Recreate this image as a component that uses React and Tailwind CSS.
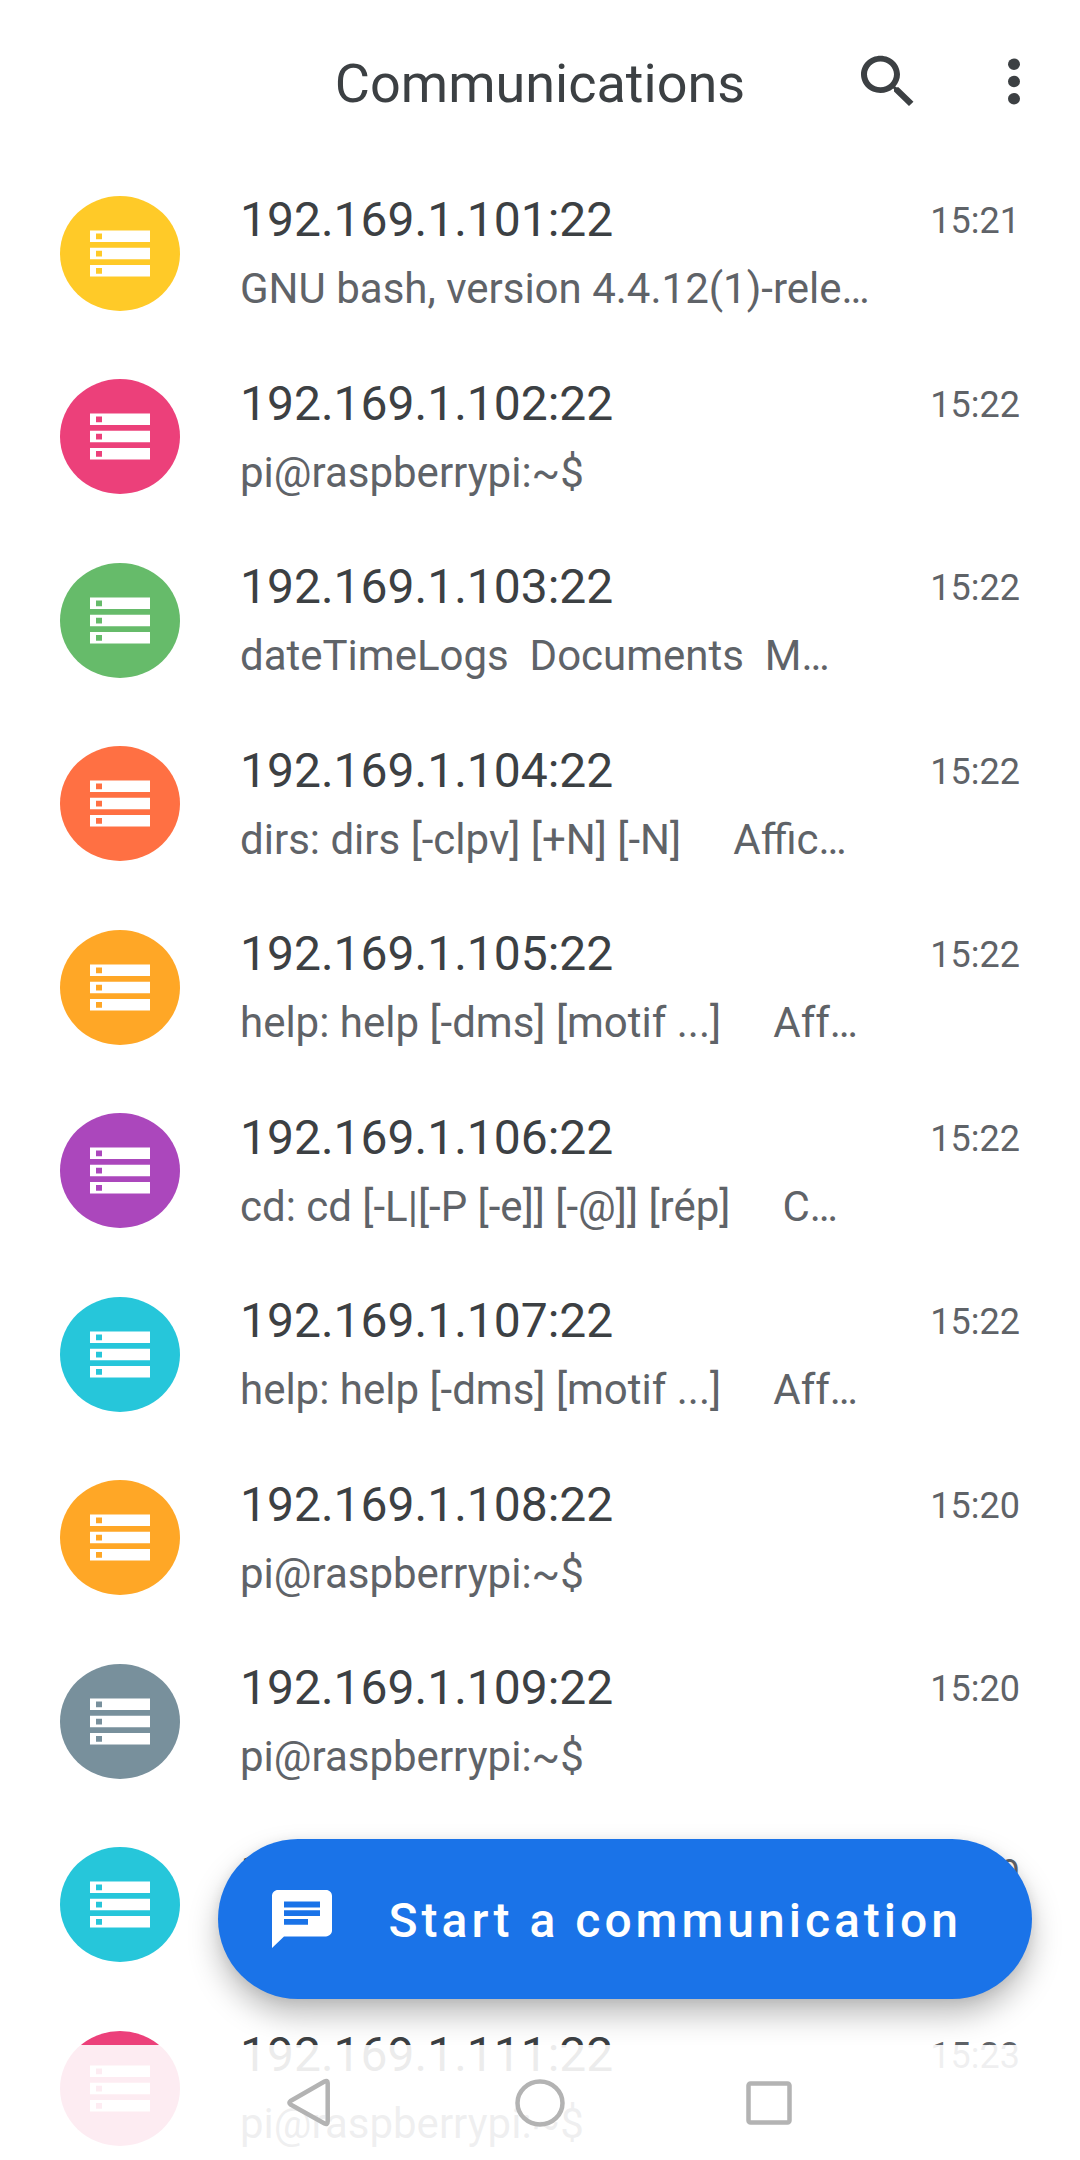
import React from "react";

const sessions = [
  { host: "192.169.1.101:22", preview: "GNU bash, version 4.4.12(1)-rele…", time: "15:21", color: "text-[#ffca28]" },
  { host: "192.169.1.102:22", preview: "pi@raspberrypi:~$", time: "15:22", color: "text-[#ec407a]" },
  { host: "192.169.1.103:22", preview: "dateTimeLogs  Documents  M…", time: "15:22", color: "text-[#66bb6a]" },
  { host: "192.169.1.104:22", preview: "dirs: dirs [-clpv] [+N] [-N]     Affic…", time: "15:22", color: "text-[#ff7043]" },
  { host: "192.169.1.105:22", preview: "help: help [-dms] [motif ...]     Aff…", time: "15:22", color: "text-[#ffa726]" },
  { host: "192.169.1.106:22", preview: "cd: cd [-L|[-P [-e]] [-@]] [rép]     C…", time: "15:22", color: "text-[#ab47bc]" },
  { host: "192.169.1.107:22", preview: "help: help [-dms] [motif ...]     Aff…", time: "15:22", color: "text-[#26c6da]" },
  { host: "192.169.1.108:22", preview: "pi@raspberrypi:~$", time: "15:20", color: "text-[#ffa726]" },
  { host: "192.169.1.109:22", preview: "pi@raspberrypi:~$", time: "15:20", color: "text-[#78909c]" },
  { host: "192.169.1.110:22", preview: "pi@raspberrypi:~$", time: "15:19", color: "text-[#26c6da]" },
  { host: "192.169.1.111:22", preview: "pi@raspberrypi:~$", time: "15:23", color: "text-[#ec407a]" },
];

function Avatar({ color }) {
  return (
    <svg className={`h-[115px] w-[120px] shrink-0 ${color}`} viewBox="0 0 40 40" preserveAspectRatio="none" aria-hidden="true">
      <circle cx="20" cy="20" r="20" fill="currentColor" />
      <path
        fill="#fff"
        d="M10 28h20v-4H10v4zm2-3h2v2h-2v-2zM10 12v4h20v-4H10zm4 3h-2v-2h2v2zm-4 7h20v-4H10v4zm2-3h2v2h-2v-2z"
      />
    </svg>
  );
}

function SessionRow({ session }) {
  return (
    <li className="flex min-h-[184px] items-center gap-[60px] px-[60px] even:min-h-[183px]">
      <Avatar color={session.color} />
      <div className="min-w-0 flex-1 pt-[2px]">
        <div className="flex items-start justify-between">
          <h2 className="text-5xl leading-[69px] text-[#3c4043]">{session.host}</h2>
          <time className="text-4xl leading-[72px] text-[#5f6368]">{session.time}</time>
        </div>
        <p className="-mt-[3px] overflow-hidden text-[42px] leading-[69px] whitespace-pre text-[#5f6368]">{session.preview}</p>
      </div>
    </li>
  );
}

function Header() {
  return (
    <header className="grid h-[161px] shrink-0 grid-cols-[1fr_auto_1fr] items-center px-[30px] text-[#3c4043]">
      <h1 className="col-start-2 pt-[6px] text-[54px] leading-[72px]">Communications</h1>
      <div className="flex justify-end gap-[54px] pt-[2px]">
        <button type="button" aria-label="Search">
          <svg className="h-[69px] w-[72px]" viewBox="0 0 24 24" preserveAspectRatio="none" fill="currentColor">
            <path d="M15.5 14h-.79l-.28-.27C15.41 12.59 16 11.11 16 9.5 16 5.91 13.09 3 9.5 3S3 5.91 3 9.5 5.91 16 9.5 16c1.61 0 3.09-.59 4.23-1.57l.27.28v.79l5 4.99L20.49 19l-4.99-5zm-6 0C7.01 14 5 11.99 5 9.5S7.01 5 9.5 5 14 7.01 14 9.5 11.99 14 9.5 14z" />
          </svg>
        </button>
        <button type="button" aria-label="More options">
          <svg className="h-[69px] w-[72px]" viewBox="0 0 24 24" preserveAspectRatio="none" fill="currentColor">
            <circle cx="12" cy="6" r="2" />
            <circle cx="12" cy="12" r="2" />
            <circle cx="12" cy="18" r="2" />
          </svg>
        </button>
      </div>
    </header>
  );
}

function NavBar() {
  return (
    <nav className="absolute inset-x-0 bottom-0 flex h-[115px] items-center justify-center bg-white/90 text-[#b3b3b3]">
      <button type="button" aria-label="Back" className="flex w-[229px] justify-center">
        <svg className="h-[52px] w-[52px]" viewBox="0 0 52 52" fill="none" stroke="currentColor" strokeWidth="4.5" strokeLinejoin="round">
          <path d="M39.5 4.5Q42.7 3 42.7 6V44.5Q42.7 48 39.5 46.5L5.5 27.5Q3.3 25.7 5.5 24Z" />
        </svg>
      </button>
      <button type="button" aria-label="Home" className="flex w-[229px] justify-center">
        <svg className="h-12 w-[50px]" viewBox="0 0 50 48" fill="none" stroke="currentColor" strokeWidth="4.5">
          <ellipse cx="25" cy="24" rx="22.5" ry="21.5" />
        </svg>
      </button>
      <button type="button" aria-label="Recent apps" className="flex w-[229px] justify-center">
        <svg className="h-[44px] w-[46px]" viewBox="0 0 46 44" fill="none" stroke="currentColor" strokeWidth="4.5">
          <rect x="2.5" y="2.5" width="41" height="39" rx="2" />
        </svg>
      </button>
    </nav>
  );
}

export default function App() {
  return (
    <div className="relative flex h-screen flex-col overflow-hidden bg-white font-[Roboto,sans-serif]">
      <Header />
      <ul className="min-h-0 flex-1 overflow-y-auto [scrollbar-width:none]">
        {sessions.map(s => (
          <SessionRow key={s.host} session={s} />
        ))}
      </ul>

      {/* Floating action button */}
      <button
        type="button"
        className="absolute right-[48px] bottom-[161px] flex h-[160px] items-center gap-[57px] rounded-full bg-[#1a73e8] pr-[70px] pl-[54px] text-5xl font-medium tracking-[4px] text-white shadow-[0_16px_30px_rgba(0,0,0,0.26),0_2px_12px_rgba(0,0,0,0.08)]"
      >
        <svg className="h-[58px] w-[60px]" viewBox="2 2 20 20" preserveAspectRatio="none" fill="currentColor" aria-hidden="true">
          <path d="M20 2H4c-1.1 0-2 .9-2 2v18l4-4h14c1.1 0 2-.9 2-2V4c0-1.1-.9-2-2-2zM6 9h12v2H6V9zm8 5H6v-2h8v2zm4-6H6V6h12v2z" />
        </svg>
        <span className="pt-[3px]">Start a communication</span>
      </button>

      <NavBar />
    </div>
  );
}
